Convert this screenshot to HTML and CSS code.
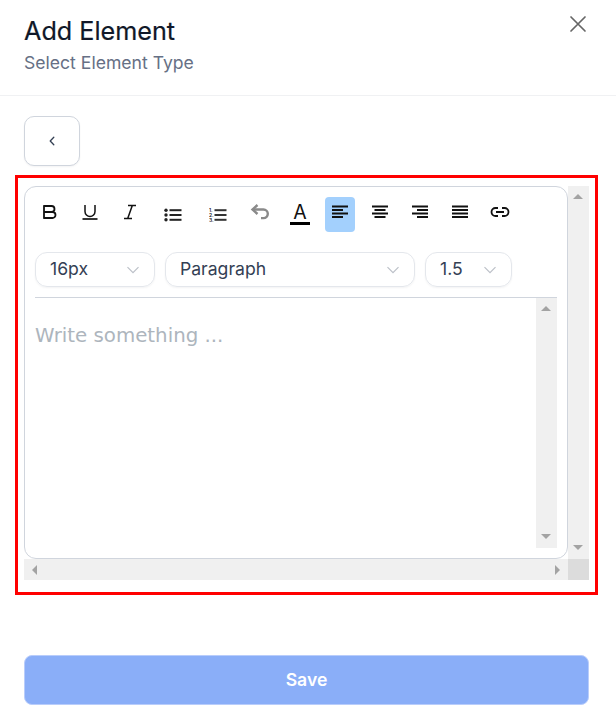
FILE: index.html
```html
<!DOCTYPE html>
<html lang="en">
<head>
<meta charset="utf-8">
<title>Add Element</title>
<link rel="stylesheet" href="styles.css">
</head>
<body>
<div class="modal">
  <header class="head">
    <div>
      <h1 class="title">Add Element</h1>
      <p class="sub">Select Element Type</p>
    </div>
    <svg class="close" width="24" height="24" viewBox="0 0 24 24" fill="none" stroke="#666" stroke-width="1.7" stroke-linecap="round"><path d="M5 5l14 14M19 5L5 19"/></svg>
  </header>
  <div class="content">
    <button class="back"><svg width="12" height="12" viewBox="0 0 12 12" fill="none" stroke="#344054" stroke-width="1.3" stroke-linecap="round" stroke-linejoin="round"><path d="M7.8 2.3L4.2 6l3.6 3.7"/></svg></button>
    <section class="frame">
      <div class="outer">
        <div class="outer-row">
          <div class="editor">
            <div class="toolbar">
              <span class="tool raised"><svg width="16" height="16" viewBox="0 0 16 16" fill="none" stroke="#111" stroke-width="1.8" stroke-linejoin="round"><path d="M2 2h7.5a3 3 0 0 1 0 6H2zM2 8h8.5a3 3 0 0 1 0 6H2zM2 1.2v13.6"/></svg></span>
              <span class="tool raised"><svg width="16" height="16" viewBox="0 0 16 16" fill="none" stroke="#111" stroke-width="1.5"><path d="M3 1v6.5a5 5 0 0 0 10 0V1"/><path d="M.5 15h15" stroke-width="1.7"/></svg></span>
              <span class="tool raised"><svg width="14" height="16" viewBox="0 0 14 16" fill="none" stroke="#111" stroke-width="1.5"><path d="M5 1.5h8M1 14.5h8M9.3 1.5L4.7 14.5"/></svg></span>
              <span class="tool wide"><svg width="18" height="14" viewBox="0 0 18 14" fill="#222"><circle cx="2" cy="2.2" r="1.7"/><circle cx="2" cy="7" r="1.7"/><circle cx="2" cy="11.8" r="1.7"/><rect x="5.5" y="1.2" width="12" height="2"/><rect x="5.5" y="6" width="12" height="2"/><rect x="5.5" y="10.8" width="12" height="2"/></svg></span>
              <span class="tool wide"><svg width="18" height="14" viewBox="0 0 18 14" fill="#333"><text class="ol-num" x="0" y="4">1.</text><text class="ol-num" x="0" y="9">2.</text><text class="ol-num" x="0" y="14">3.</text><rect x="5.5" y="1.2" width="12" height="2"/><rect x="5.5" y="6" width="12" height="2"/><rect x="5.5" y="10.8" width="12" height="2"/></svg></span>
              <span class="tool raised"><svg width="20" height="16" viewBox="0 0 20 16" fill="none" stroke="#8a8a8a" stroke-width="2.4"><path d="M7.5 1L2.5 5.5 7.5 10"/><path d="M3 5.5h10.5a4.2 4.2 0 0 1 0 8.6H11"/></svg></span>
              <span class="tool tool-color"><span class="letter">A</span><span class="colorbar"></span></span>
              <span class="tool tool-active raised"><svg width="18" height="14" viewBox="0 0 18 14" fill="#111"><rect x="1" y="0.5" width="16" height="2"/><rect x="1" y="4" width="11" height="2"/><rect x="1" y="7.5" width="16" height="2"/><rect x="1" y="11" width="11" height="2"/></svg></span>
              <span class="tool raised"><svg width="18" height="14" viewBox="0 0 18 14" fill="#111"><rect x="1" y="0.5" width="16" height="2"/><rect x="3.5" y="4" width="11" height="2"/><rect x="1" y="7.5" width="16" height="2"/><rect x="3.5" y="11" width="11" height="2"/></svg></span>
              <span class="tool raised"><svg width="18" height="14" viewBox="0 0 18 14" fill="#111"><rect x="1" y="0.5" width="16" height="2"/><rect x="6" y="4" width="11" height="2"/><rect x="1" y="7.5" width="16" height="2"/><rect x="6" y="11" width="11" height="2"/></svg></span>
              <span class="tool raised"><svg width="18" height="14" viewBox="0 0 18 14" fill="#111"><rect x="1" y="0.5" width="16" height="2"/><rect x="1" y="4" width="16" height="2"/><rect x="1" y="7.5" width="16" height="2"/><rect x="1" y="11" width="16" height="2"/></svg></span>
              <span class="tool raised"><svg width="20" height="12" viewBox="0 0 20 12" fill="none" stroke="#111" stroke-width="1.8"><path d="M8 2H5.5a4 4 0 0 0 0 8H8M12 2h2.5a4 4 0 0 1 0 8H12M6 6h8"/></svg></span>
            </div>
            <div class="selects">
              <div class="select s-size"><span>16px</span><svg class="chev" width="14" height="8" viewBox="0 0 14 8" fill="none" stroke="#bcc0c8" stroke-width="1.2"><path d="M1.5 1.2L7 6.7l5.5-5.5"/></svg></div>
              <div class="select s-format"><span>Paragraph</span><svg class="chev" width="14" height="8" viewBox="0 0 14 8" fill="none" stroke="#bcc0c8" stroke-width="1.2"><path d="M1.5 1.2L7 6.7l5.5-5.5"/></svg></div>
              <div class="select s-line"><span>1.5</span><svg class="chev" width="14" height="8" viewBox="0 0 14 8" fill="none" stroke="#bcc0c8" stroke-width="1.2"><path d="M1.5 1.2L7 6.7l5.5-5.5"/></svg></div>
            </div>
            <div class="write">
              <div class="placeholder">Write something ...</div>
              <div class="vbar inner-bar"><i class="arr up"></i><i class="arr down"></i></div>
            </div>
          </div>
          <div class="vbar outer-bar"><i class="arr up"></i><i class="arr down"></i></div>
        </div>
        <div class="hbar">
          <div class="hbar-track"><i class="arr left"></i><i class="arr right"></i></div>
          <div class="corner"></div>
        </div>
      </div>
    </section>
    <button class="save">Save</button>
  </div>
</div>
</body>
</html>
```
FILE: styles.css
```css
* { box-sizing: border-box; }
html, body { margin: 0; padding: 0; background: #fff; }
body { font-family: Inter, "Liberation Sans", sans-serif; width: 616px; height: 720px; overflow: hidden; }
.head { height: 96px; border-bottom: 1px solid #f0f1f3; padding: 14px 26px 0 24px; display: flex; justify-content: space-between; align-items: flex-start; }
.title { margin: 0; font-size: 25.2px; line-height: 34px; font-weight: 400; color: #101828; -webkit-text-stroke: 0.2px #101828; }
.sub { margin: 3px 0 0; font-size: 17.6px; line-height: 24px; font-weight: 400; color: #667085; }
.close { margin-top: -2px; }
.content { padding: 20px 27px 0 24px; display: flex; flex-direction: column; }
.back { width: 56px; height: 50px; padding: 0; background: #fff; border: 1px solid #d0d5dd; border-radius: 10px; display: flex; align-items: center; justify-content: center; box-shadow: 0 1px 2px rgba(16,24,40,.05); }
.frame { margin: 9px 0 0 -9px; width: 583px; height: 420px; border: 3px solid #f00; padding: 8px 6px 12px 6px; }
.outer { display: flex; flex-direction: column; height: 394px; width: 565px; }
.outer-row { display: flex; height: 373px; }
.editor { width: 544px; height: 373px; border: 1px solid #d0d5dd; border-radius: 12px; padding: 0 10px; display: flex; flex-direction: column; }
.toolbar { display: flex; height: 65px; padding-top: 10px; align-items: flex-start; }
.tool { width: 30px; height: 35px; margin-right: 10px; flex: none; display: flex; align-items: center; justify-content: center; }
.tool.wide { width: 35px; }
.tool.raised { padding-bottom: 5px; }
.tool-active { background: #a3d0fd; border-radius: 4px; }
.tool-color { flex-direction: column; justify-content: flex-start; padding-top: 5px; }
.letter { font-size: 19.5px; line-height: 20px; color: #111; font-weight: 400; }
.colorbar { width: 20px; height: 3px; background: #000; }
.ol-num { font-family: Inter, sans-serif; font-size: 5px; font-weight: 600; fill: #222; }
.selects { display: flex; gap: 10px; height: 46px; border-bottom: 1px solid #d0d5dd; }
.select { height: 35px; border: 1px solid #e4e7ec; border-radius: 12px; display: flex; align-items: center; justify-content: space-between; padding: 0 14px; font-size: 17.6px; line-height: 32px; color: #344054; box-shadow: 0 1px 2px rgba(16,24,40,.05); }
.select span { position: relative; top: -1px; }
.s-size { width: 120px; }
.s-format { width: 250px; }
.s-line { width: 87px; }
.write { flex: 1; display: flex; justify-content: space-between; min-height: 0; }
.placeholder { font-family: "DejaVu Sans", sans-serif; font-size: 19.8px; color: #adb5bd; padding-top: 26px; line-height: 24px; }
.vbar { background: #f0f0f0; width: 21px; position: relative; }
.inner-bar { height: 250px; }
.outer-bar { height: 373px; }
.hbar { display: flex; height: 21px; }
.hbar-track { width: 544px; background: #f0f0f0; position: relative; }
.corner { width: 21px; background: #dcdcdc; }
.arr { position: absolute; width: 0; height: 0; border-style: solid; border-color: transparent; }
.arr.up { top: 8px; left: 5px; border-width: 0 5px 5px 5px; border-bottom-color: #a3a3a3; }
.arr.down { bottom: 9px; left: 5px; border-width: 5px 5px 0 5px; border-top-color: #a3a3a3; }
.arr.left { left: 8px; top: 6px; border-width: 5px 5px 5px 0; border-right-color: #a3a3a3; }
.arr.right { right: 8px; top: 6px; border-width: 5px 0 5px 5px; border-left-color: #a3a3a3; }
.save { margin-top: 60px; width: 565px; height: 50px; padding: 0 0 2px; background: #8aaef8; border: 1px solid #b9cdfb; border-radius: 8px; color: #fff; font-family: Inter, "Liberation Sans", sans-serif; font-size: 17.6px; font-weight: 600; }
```
